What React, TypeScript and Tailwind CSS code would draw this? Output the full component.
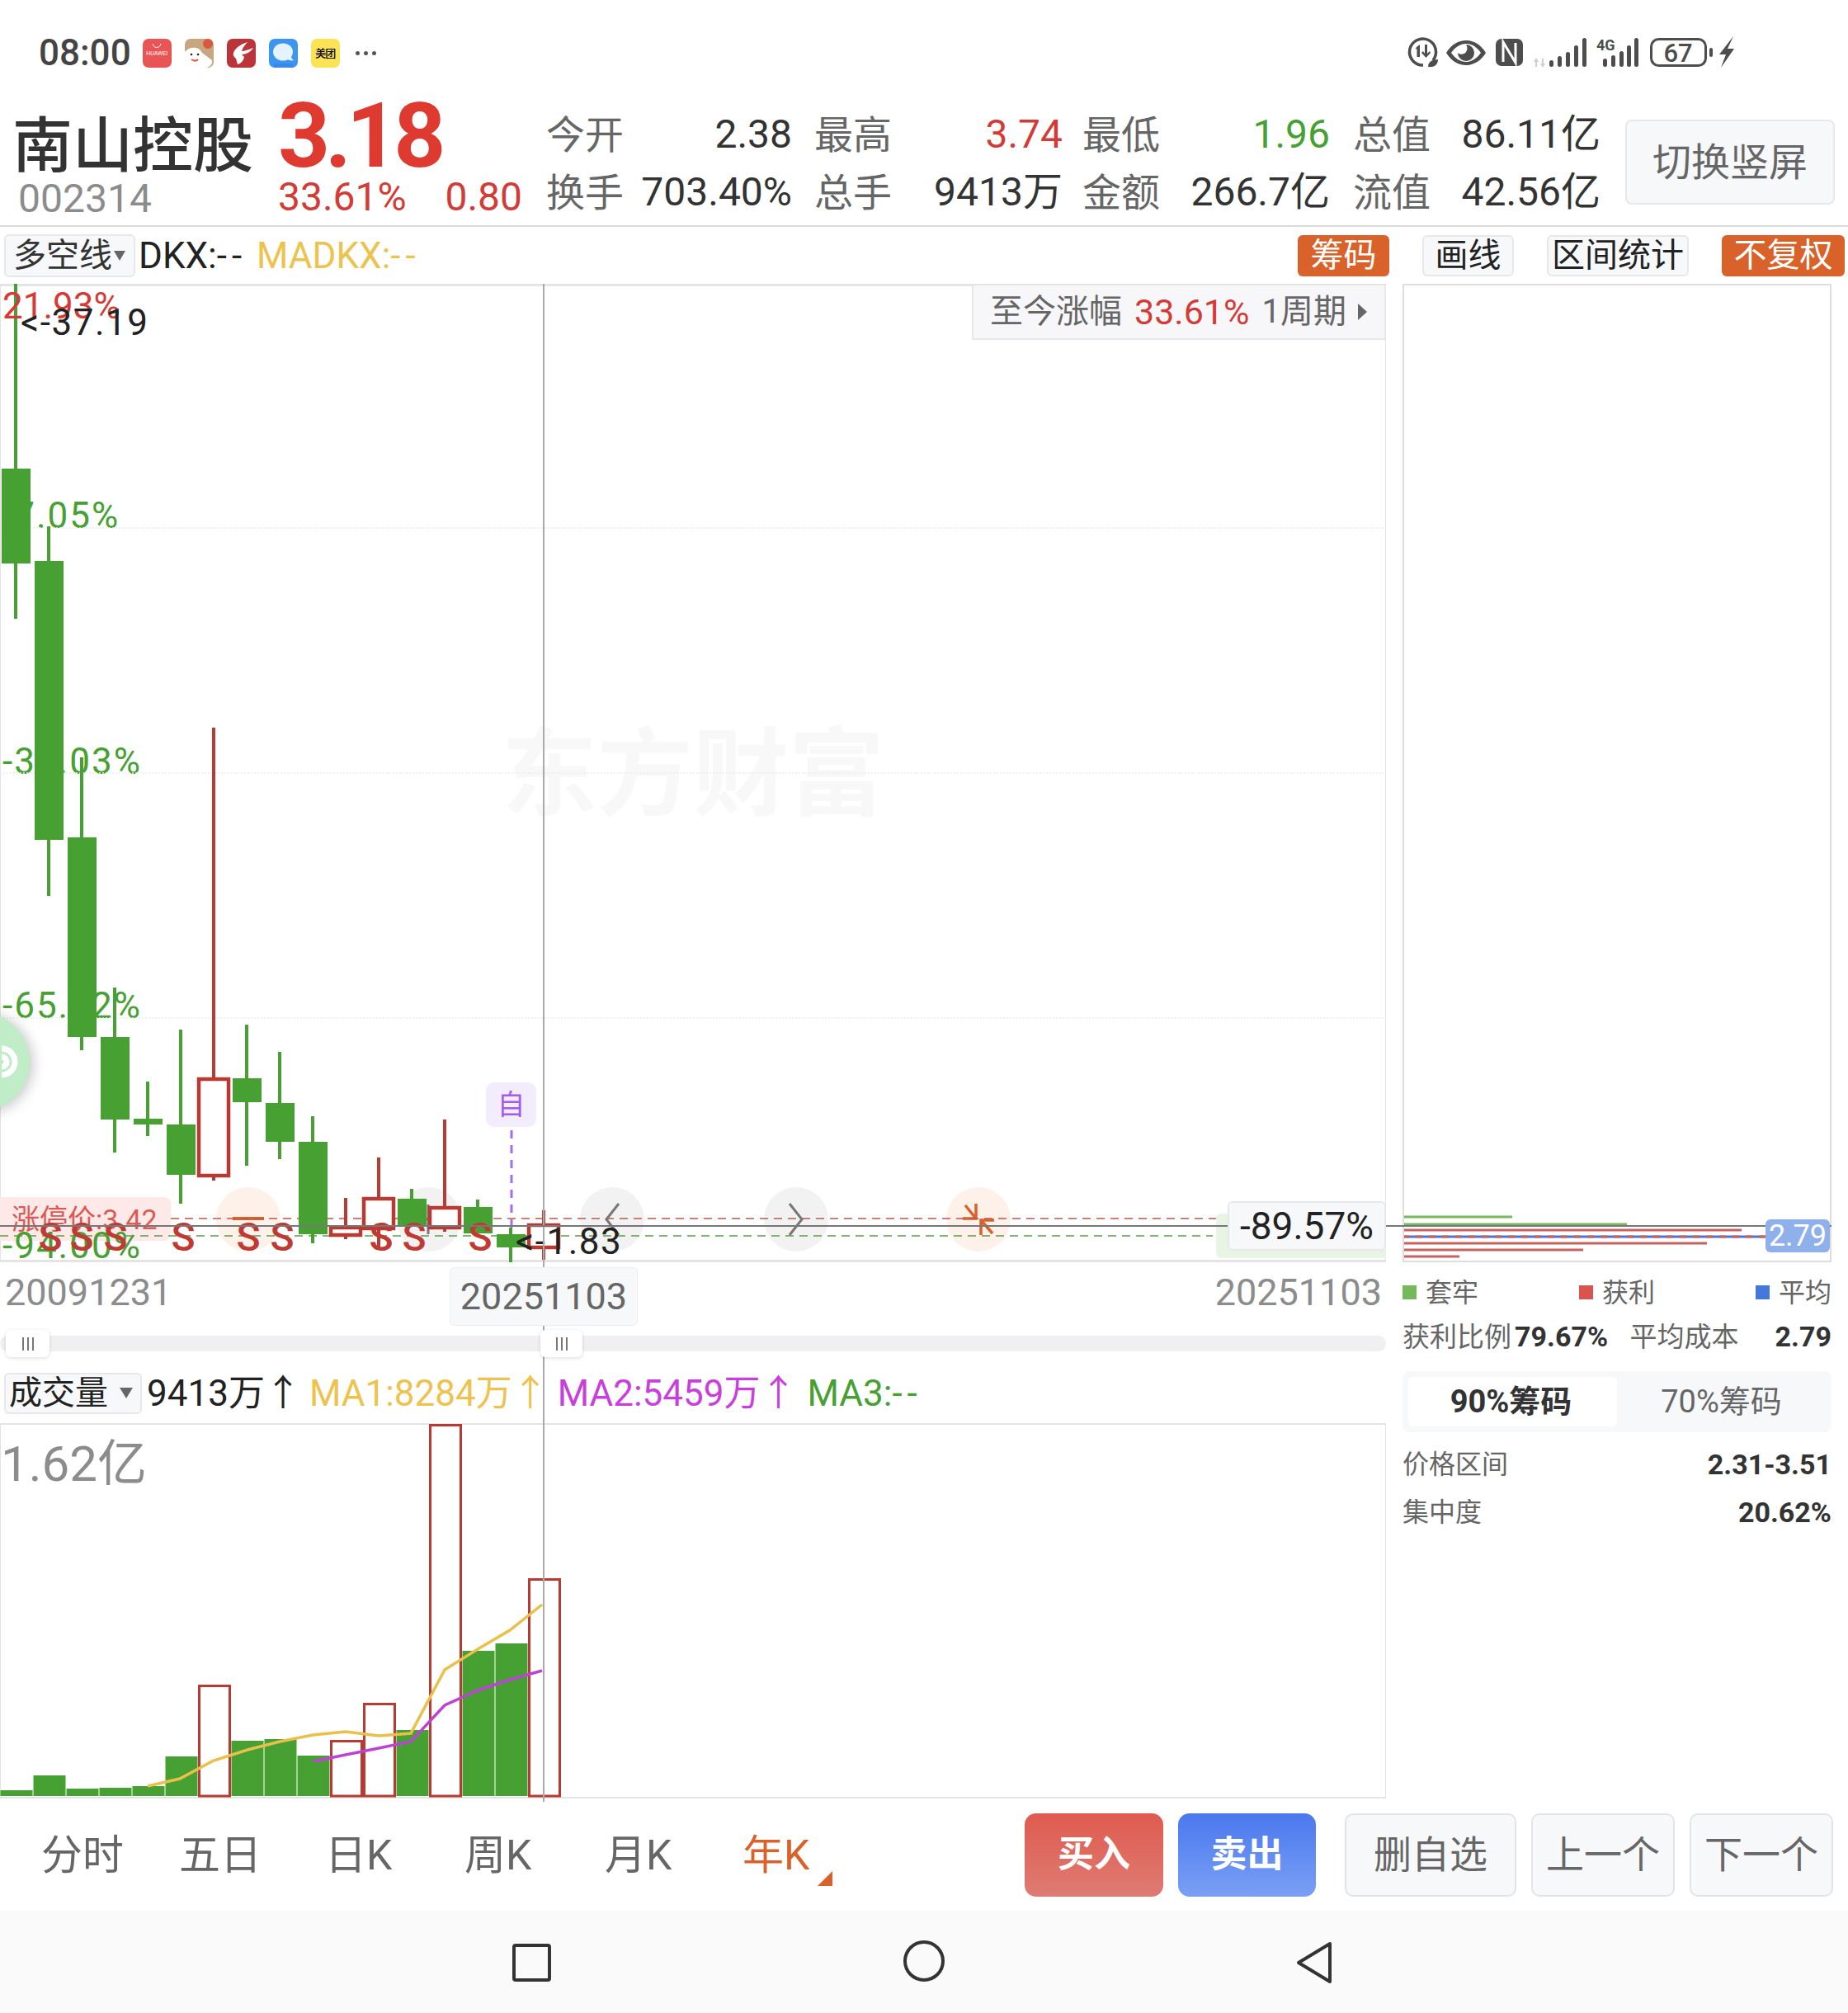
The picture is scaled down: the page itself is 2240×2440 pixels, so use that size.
import React from 'react'

const RED = '#b93a32'
const GREEN = '#46a032'

// x center, wick top/bottom, body top/bottom, up = hollow red
const CANDLES = [
  { x: 19, h: 344, l: 750, t: 568, b: 683, up: false },
  { x: 59, h: 638, l: 1086, t: 680, b: 1018, up: false },
  { x: 99, h: 918, l: 1273, t: 1015, b: 1257, up: false },
  { x: 139, h: 1197, l: 1397, t: 1257, b: 1357, up: false },
  { x: 179, h: 1311, l: 1377, t: 1356, b: 1363, up: false },
  { x: 219, h: 1248, l: 1459, t: 1363, b: 1424, up: false },
  { x: 259, h: 882, l: 1431, t: 1308, b: 1425, up: true },
  { x: 299, h: 1242, l: 1413, t: 1307, b: 1336, up: false },
  { x: 339, h: 1275, l: 1405, t: 1337, b: 1384, up: false },
  { x: 379, h: 1353, l: 1507, t: 1384, b: 1496, up: false },
  { x: 419, h: 1452, l: 1502, t: 1488, b: 1497, up: true },
  { x: 459, h: 1403, l: 1512, t: 1453, b: 1489, up: true },
  { x: 499, h: 1441, l: 1487, t: 1453, b: 1487, up: false },
  { x: 539, h: 1357, l: 1493, t: 1464, b: 1488, up: true },
  { x: 579, h: 1454, l: 1495, t: 1463, b: 1495, up: false },
  { x: 619, h: 1488, l: 1530, t: 1496, b: 1512, up: false },
  { x: 659, h: 1467, l: 1527, t: 1485, b: 1512, up: true },
]

const S_MARKS = [61, 99, 140, 222, 301, 342, 462, 502, 582]

const VOLUMES = [
  { t: 2170, up: false }, { t: 2152, up: false }, { t: 2168, up: false }, { t: 2167, up: false },
  { t: 2165, up: false }, { t: 2129, up: false }, { t: 2042, up: true }, { t: 2110, up: false },
  { t: 2108, up: false }, { t: 2128, up: false }, { t: 2109, up: true }, { t: 2064, up: true },
  { t: 2097, up: false }, { t: 1726, up: true }, { t: 2001, up: false }, { t: 1992, up: false },
  { t: 1913, up: true },
]

const MA1 = '179,2165 218,2156 259,2134 300,2121 339,2111 379,2103 419,2099 459,2104 498,2101 539,2024 579,1999 618,1976 657,1945'
const MA2 = '380,2135 419,2127 459,2119 498,2111 539,2067 579,2049 618,2036 657,2025'

const TABS = [
  { label: '分时', w: 'w-[167px]' },
  { label: '五日', w: 'w-[177px]' },
  { label: '日K', w: 'w-[169px]' },
  { label: '周K', w: 'w-[170px]' },
  { label: '月K', w: 'w-[167px]' },
]

function StatusTiles() {
  return (
    <div className="ml-[14px] flex items-center gap-[16px]">
      <div className="flex h-[35px] w-[35px] flex-col items-center rounded-[7px] bg-[#ea5455] text-white">
        <svg width="14" height="8" viewBox="0 0 14 8" className="mt-[5px]"><path d="M2 1c1 6 9 6 10 0" fill="none" stroke="#fff" strokeWidth="1" /></svg>
        <span className="mt-[2px] text-[7px] leading-none">HUAWEI</span>
      </div>
      <svg width="35" height="35" viewBox="0 0 35 35">
        <rect width="35" height="35" rx="7" fill="#c9a77e" />
        <circle cx="28" cy="6" r="6" fill="#d9593f" />
        <path d="M0 16c6-7 17-7 21 1l12 9c1 5-3 8-7 9H6c-5 0-6-3-6-6z" fill="#fff" />
        <circle cx="8" cy="19" r="1.3" fill="#222" />
        <circle cx="16" cy="19" r="1.3" fill="#222" />
        <path d="M8 25c3 2 6 2 8 0" fill="none" stroke="#d9593f" strokeWidth="2" />
      </svg>
      <svg width="35" height="35" viewBox="0 0 35 35">
        <rect width="35" height="35" rx="7" fill="#bb3439" />
        <path d="M25 4C18 6 10 11 8 17c-1 3 1 5 3 7l2 7c4-1 7-4 8-9l-3-3c5 0 11-3 14-8-5 2-11 4-14 4 1-4 4-8 7-11z" fill="#fff" />
      </svg>
      <svg width="35" height="35" viewBox="0 0 35 35">
        <rect width="35" height="35" rx="7" fill="#3d95f2" />
        <ellipse cx="17" cy="16" rx="12" ry="10.5" fill="#e6f3fe" />
        <path d="M22 25c3 1 6 2 8 1-2-1-3-3-3-5z" fill="#e6f3fe" />
        <path d="M6 30h23v5H6z" fill="#3577e8" opacity=".5" />
      </svg>
      <div className="flex h-[35px] w-[35px] items-center justify-center rounded-[7px] bg-[#fce354] text-[13px] font-medium leading-none tracking-[-1px] text-black">美团</div>
      <div className="ml-[3px] flex gap-[5px]">
        <span className="h-[5px] w-[5px] rounded-full bg-[#555]" />
        <span className="h-[5px] w-[5px] rounded-full bg-[#555]" />
        <span className="h-[5px] w-[5px] rounded-full bg-[#555]" />
      </div>
    </div>
  )
}

function StatusRight() {
  return (
    <svg width="402" height="42" viewBox="1702 44 402 42" className="ml-auto mr-[136px]" fill="#4d4d4d">
      <path d="M1737 74a16 16 0 1 0-12 6" fill="none" stroke="#4d4d4d" strokeWidth="3.5" />
      <path d="M1717 58l4-3v15h-3.500v-10l-2 1z M1727 55h3v11l3-3 1 2-5.500 6-5.500-6 2-2 2 3z" />
      <path d="M1731 82c0-6 5-9 12-9 0 6-4 10-12 9z" />
      <path d="M1753 65c6-10 15-15 24-15s18 5 24 15c-6 10-15 15-24 15s-18-5-24-15zM1759 65c5 7 11 11 18 11s13-4 18-11c-5-7-11-11-18-11s-13 4-18 11z" fillRule="evenodd" />
      <path d="M1777 55a10 10 0 1 1-10 10c3 3 8 2 10-1 2-3 2-6 0-9z" />
      <rect x="1813" y="48" width="33" height="33" rx="7" />
      <path d="M1822 76V52l15 25V53" fill="none" stroke="#fff" strokeWidth="3" />
      <path d="M1859 76l3-5 3 5h-2v6h-2v-6z M1867 78l3 5 3-5h-2v-6h-2v6z" fill="#cfcfcf" />
      <rect x="1878" y="74" width="5" height="8" rx="2.500" />
      <rect x="1888" y="69" width="5" height="13" rx="2.500" />
      <rect x="1898" y="64" width="5" height="18" rx="2.500" />
      <rect x="1908" y="56" width="5" height="26" rx="2.500" />
      <rect x="1918" y="47" width="5" height="35" rx="2.500" />
      <text x="1935" y="62" fontSize="18" fontWeight="700" fontFamily="Roboto, sans-serif">4G</text>
      <rect x="1943" y="72" width="5" height="10" rx="2.500" />
      <rect x="1953" y="68" width="5" height="14" rx="2.500" />
      <rect x="1963" y="63" width="5" height="19" rx="2.500" />
      <rect x="1972" y="56" width="5" height="26" rx="2.500" />
      <rect x="1981" y="47" width="5" height="35" rx="2.500" />
      <rect x="2001.500" y="48.500" width="66" height="32" rx="9" fill="none" stroke="#4d4d4d" strokeWidth="3" />
      <text x="2034" y="76" fontSize="31" fontWeight="500" textAnchor="middle" fontFamily="Roboto, sans-serif">67</text>
      <rect x="2072" y="59" width="4" height="11" rx="2" />
      <path d="M2101 45L2084 67h8l-6 16 16-23h-8z" />
    </svg>
  )
}

function StatCell({ children, color = 'text-[#333]' }: { children: React.ReactNode; color?: string }) {
  return <div className={`whitespace-nowrap text-right text-[48px] ${color}`}>{children}</div>
}

function Label({ children }: { children: React.ReactNode }) {
  return <div className="whitespace-nowrap text-right text-[#666]">{children}</div>
}

function Header() {
  return (
    <div className="flex h-[165px] border-b-2 border-[#dcdcdc]">
      <div className="w-[337px] pl-[15px] pt-[31px]">
        <div className="text-[73px] font-medium leading-[72px] text-[#333]">南山控股</div>
        <div className="mt-[5px] pl-[7px] text-[48px] leading-[46px] text-[#8c8c8c]">002314</div>
      </div>
      <div className="w-[325px]">
        <div className="mt-[5px] text-[110px] font-bold leading-[100px] tracking-[-6px] text-[#de3a30]">3.18</div>
        <div className="mt-[1px] flex w-[296px] justify-between text-[48px] leading-[46px] text-[#d33c36]">
          <span>33.61%</span>
          <span>0.80</span>
        </div>
      </div>
      <div className="mt-[18px] grid h-[140px] grid-cols-[94px_204px_121px_207px_118px_206px_122px_206px] grid-rows-[70px_70px] items-center text-[47px] leading-none">
        <Label>今开</Label><StatCell>2.38</StatCell>
        <Label>最高</Label><StatCell color="text-[#d33c36]">3.74</StatCell>
        <Label>最低</Label><StatCell color="text-[#46a032]">1.96</StatCell>
        <Label>总值</Label><StatCell>86.11亿</StatCell>
        <Label>换手</Label><StatCell>703.40%</StatCell>
        <Label>总手</Label><StatCell>9413万</StatCell>
        <Label>金额</Label><StatCell>266.7亿</StatCell>
        <Label>流值</Label><StatCell>42.56亿</StatCell>
      </div>
      <button className="ml-[30px] mt-[35px] h-[103px] w-[254px] rounded-[8px] border-2 border-[#e6e8eb] bg-[#f7f8fa] pt-[2px] text-[47px] text-[#666]">切换竖屏</button>
    </div>
  )
}

function Toolbar() {
  return (
    <div className="flex h-[69px] items-center text-[40px] leading-none">
      <div className="ml-[5px] flex h-[52px] w-[159px] items-center rounded-[6px] border-2 border-[#e6e8eb] bg-[#f7f8fa] pl-[9px] text-[#333]">
        多空线
        <svg width="14" height="12" viewBox="0 0 14 12" className="ml-[2px]"><path d="M0 0h14L7 12z" fill="#666" /></svg>
      </div>
      <span className="ml-[4px] text-[44px] text-[#222]">DKX:<span className="tracking-[6px]">--</span></span>
      <span className="ml-[12px] text-[44px] text-[#edc34f]">MADKX:<span className="tracking-[6px]">--</span></span>
      <div className="ml-auto mr-[4px] flex items-center gap-[40px]">
        <div className="flex h-[50px] w-[111px] items-center justify-center rounded-[6px] bg-[#d9622b] text-white">筹码</div>
        <div className="flex h-[50px] w-[111px] items-center justify-center rounded-[6px] border-2 border-[#e6e8eb] bg-[#f7f8fa] text-[#222]">画线</div>
        <div className="flex h-[50px] w-[172px] items-center justify-center rounded-[6px] border-2 border-[#e6e8eb] bg-[#f7f8fa] text-[#222]">区间统计</div>
        <div className="flex h-[50px] w-[149px] items-center justify-center rounded-[6px] bg-[#d9622b] text-white">不复权</div>
      </div>
    </div>
  )
}

function CircleBtn({ left, peach, children }: { left: number; peach?: boolean; children: React.ReactNode }) {
  return (
    <div
      className={`absolute top-[1095px] flex h-[78px] w-[78px] items-center justify-center rounded-full ${peach ? 'bg-[#fdf1ea]' : 'bg-[#f2f2f2]'}`}
      style={{ left }}
    >
      {children}
    </div>
  )
}

function CandleChart() {
  return (
    <div className="relative h-[1186px] w-[1680px] overflow-hidden bg-white text-[44px] leading-none">
      <div className="absolute inset-0 border-x border-y-[3px] border-[#e4e4e4]" />

      {/* watermark */}
      <div className="absolute left-[608px] top-[537px] text-[116px] font-bold leading-none text-[#f8f8f8]">东方财富</div>

      <div className="absolute left-[3px] top-[259px] tracking-[2px] text-[#46a032]">-7.05%</div>
      <div className="absolute left-[3px] top-[557px] tracking-[2px] text-[#46a032]">-36.03%</div>
      <div className="absolute left-[3px] top-[853px] tracking-[2px] text-[#46a032]">-65.02%</div>

      <div className="absolute left-0 top-[1107px] flex h-[53px] w-[207px] items-center rounded-r-[8px] bg-[#fce9e8] pl-[14px] text-[34px] text-[#dc5a55]">涨停价:3.42</div>

      <CircleBtn left={262} peach>
        <svg width="38" height="6" viewBox="0 0 38 6" className="mt-[-2px]"><path d="M0 3h38" stroke="#d9622b" strokeWidth="4" /></svg>
      </CircleBtn>
      <CircleBtn left={481}>
        <svg width="40" height="38" viewBox="0 0 40 38"><path d="M1 19h38M19 1v36" stroke="#777" strokeWidth="3" fill="none" /></svg>
      </CircleBtn>
      <CircleBtn left={703}>
        <svg width="20" height="40" viewBox="0 0 20 40"><path d="M18 1L3 20l15 19" stroke="#777" strokeWidth="3" fill="none" /></svg>
      </CircleBtn>
      <CircleBtn left={926}>
        <svg width="20" height="40" viewBox="0 0 20 40"><path d="M2 1l15 19L2 39" stroke="#777" strokeWidth="3" fill="none" /></svg>
      </CircleBtn>
      <CircleBtn left={1147} peach>
        <svg width="40" height="40" viewBox="0 0 40 40" fill="none" stroke="#d9622b" strokeWidth="3.500">
          <path d="M17 1v18H1M4 3l13 16" />
          <path d="M23 39V21h16M37 37L23 21" />
        </svg>
      </CircleBtn>

      <svg className="absolute left-0 top-0" width="1680" height="1186" viewBox="0 344 1680 1186">
        <path d="M0 640h1680M0 937h1680M0 1234h1680" stroke="#ececec" strokeWidth="1.500" strokeDasharray="2 2" />
        <path d="M207 1477h1273" stroke="#c0564f" strokeWidth="1.500" strokeDasharray="10 7" />
        <path d="M0 1498h1470" stroke="#5c9c4a" strokeWidth="1.500" strokeDasharray="10 7" />
        <path d="M620 1370v120" stroke="#a46fe8" strokeWidth="3" strokeDasharray="10 8" />
        {CANDLES.map(c => (
          <g key={c.x}>
            <path d={`M${c.x} ${c.h}V${c.l}`} stroke={c.up ? RED : GREEN} strokeWidth="4" />
            {c.up ? (
              <rect x={c.x - 18} y={c.t} width={36} height={c.b - c.t} fill="#fff" stroke={RED} strokeWidth="4.500" />
            ) : (
              <rect x={c.x - 17} y={c.t} width={35} height={c.b - c.t} fill={GREEN} />
            )}
          </g>
        ))}
      </svg>

      <div className="absolute left-[3px] top-[5px] text-[#d33c36]">21.93%</div>
      <div className="absolute left-[25px] top-[25px] tracking-[1.5px] text-[#222]">&lt;-37.19</div>
      <div className="absolute left-[3px] top-[1147px] h-[39px] leading-[39px] tracking-[2px] text-[#46a032]">-94.00%</div>
      <div className="absolute left-[625px] top-[1139px] tracking-[1.5px] text-[#222]">&lt;-1.83</div>

      {S_MARKS.map(x => (
        <span key={x} className="absolute top-[1132px] w-[40px] text-center text-[48px] font-medium leading-none text-[#c03a33]" style={{ left: x - 20 }}>S</span>
      ))}

      <div className="absolute left-[589px] top-[968px] flex h-[54px] w-[61px] items-center justify-center rounded-[10px] bg-[#f3ecfd] text-[34px] text-[#a25fe6]">自</div>

      <div className="absolute left-[1474px] top-[1127px] h-[54px] w-[206px] rounded-l-[6px] bg-[#e8f5e5]" />
      <div className="absolute left-[1488px] top-[1112px] z-10 flex h-[60px] w-[192px] items-center justify-center rounded-[6px] border-2 border-[#e6e8eb] bg-[#f7f8fa] text-[46px] text-[#222]">-89.57%</div>

      <div className="absolute left-[1178px] top-[2px] z-10 flex h-[66px] w-[502px] items-center border-2 border-t-0 border-[#e8e8e8] bg-[#f7f7fa] pl-[20px] text-[40px] text-[#666]">
        至今涨幅
        <span className="ml-[15px] text-[43px] text-[#d33c36]">33.61%</span>
        <span className="ml-[15px]">1周期</span>
        <svg width="11" height="20" viewBox="0 0 11 20" className="ml-[14px]"><path d="M0 0l11 10L0 20z" fill="#666" /></svg>
      </div>

      {/* floating assistant button */}
      <div className="absolute left-[-84px] top-[883px] flex h-[120px] w-[120px] items-center justify-end rounded-full bg-[#c0ecc8] pr-[12px] shadow-[4px_2px_16px_rgba(0,0,0,0.22)]">
        <svg width="24" height="40" viewBox="0 0 24 40"><path d="M2 4a16 16 0 0 1 0 32M2 14a6 6 0 1 1 0 12" fill="none" stroke="#fff" strokeWidth="7" /></svg>
      </div>
    </div>
  )
}

function DateRow() {
  return (
    <div className="relative flex h-[80px] items-center justify-between pb-[8px] pl-[6px] pr-[5px] text-[45px] leading-none text-[#8c8c8c]">
      <span>20091231</span>
      <span>20251103</span>
      <div className="absolute left-[545px] top-[6px] z-10 flex h-[71px] w-[228px] items-center justify-center rounded-[6px] border border-[#eceef1] bg-[#f7f8fa] text-[#666]">20251103</div>
    </div>
  )
}

function SliderHandle({ left, width }: { left: number; width: number }) {
  return (
    <div
      className="absolute top-[-7px] z-10 flex h-[33px] items-center justify-center gap-[4px] rounded-[6px] bg-white shadow-[0_1px_4px_rgba(0,0,0,0.15)]"
      style={{ left, width }}
    >
      <span className="h-[16px] w-[2px] bg-[#777]" />
      <span className="h-[16px] w-[2px] bg-[#777]" />
      <span className="h-[16px] w-[2px] bg-[#777]" />
    </div>
  )
}

function Slider() {
  return (
    <div className="h-[50px] pt-[9px]">
      <div className="relative h-[19px] w-[1680px] rounded-full bg-[#f0f0f2]">
        <SliderHandle left={7} width={53} />
        <SliderHandle left={655} width={51} />
      </div>
    </div>
  )
}

function VolumeHeader() {
  return (
    <div className="flex h-[65px] items-center whitespace-nowrap pb-[8px] text-[44px] leading-none">
      <div className="ml-[5px] flex h-[50px] w-[167px] items-center rounded-[6px] border-2 border-[#e6e8eb] bg-[#f7f8fa] pl-[4px] text-[40px] text-[#222]">
        成交量
        <svg width="16" height="13" viewBox="0 0 16 13" className="ml-[14px]"><path d="M0 0h16L8 13z" fill="#666" /></svg>
      </div>
      <span className="ml-[6px] text-[#222]">9413万↑</span>
      <span className="ml-[10px] text-[#edc34f]">MA1:8284万↑</span>
      <span className="ml-[11px] text-[#c93fdc]">MA2:5459万↑</span>
      <span className="ml-[13px] text-[#46a032]">MA3:<span className="tracking-[6px]">--</span></span>
    </div>
  )
}

function VolumeChart() {
  return (
    <div className="relative h-[455px] w-[1680px]">
      <div className="absolute inset-0 border-x border-y-2 border-[#e4e4e4]" />
      <svg className="absolute left-0 top-0" width="1680" height="455" viewBox="0 1725 1680 455">
        {VOLUMES.map((v, i) =>
          v.up ? (
            <rect key={i} x={i * 40 + 1.5} y={v.t + 1.5} width={37} height={2177 - v.t - 1.5} fill="#fff" stroke={RED} strokeWidth="3" />
          ) : (
            <rect key={i} x={i * 40 + 0.5} y={v.t} width={39} height={2177 - v.t} fill={GREEN} />
          )
        )}
        <polyline points={MA1} fill="none" stroke="#e9c04c" strokeWidth="3.500" />
        <polyline points={MA2} fill="none" stroke="#bb45d2" strokeWidth="3.500" />
      </svg>
      <div className="absolute left-[1px] top-[20px] text-[60px] leading-none text-[#8c8c8c]">1.62亿</div>
    </div>
  )
}

function ChipPanel() {
  return (
    <div className="relative h-[1186px] w-[520px] border-x-2 border-y-2 border-[#dedede]">
      <svg className="absolute left-0 top-0" width="516" height="1182" viewBox="1702 346 516 1182">
        <path d="M1700 1475h133M1700 1484h272" stroke="#76b95a" strokeWidth="3" />
        <path d="M1700 1491h411M1700 1507h369M1700 1515h219M1700 1523h69" stroke="#c9625f" strokeWidth="3" />
        <path d="M1700 1499h520" stroke="#4f74cc" strokeWidth="3" />
        <path d="M1700 1499h520" stroke="#c9625f" strokeWidth="3" strokeDasharray="8 8" />
      </svg>
      <div className="absolute bottom-[10px] right-0 z-10 flex h-[40px] w-[78px] items-center justify-center rounded-[6px] bg-[#8fb0ea] text-[36px] leading-none text-white">2.79</div>
    </div>
  )
}

function ChipStats() {
  return (
    <div className="w-[520px] text-[#666]">
      <div className="flex h-[75px] items-center justify-between pb-[2px] text-[32px] leading-none">
        <div className="flex items-center"><span className="mr-[11px] h-[17px] w-[17px] bg-[#76b95a]" />套牢</div>
        <div className="flex items-center"><span className="mr-[11px] h-[17px] w-[17px] bg-[#d9534f]" />获利</div>
        <div className="flex items-center"><span className="mr-[11px] h-[17px] w-[17px] bg-[#4378dc]" />平均</div>
      </div>
      <div className="flex h-[30px] items-center text-[33px] leading-none">
        <span>获利比例</span>
        <span className="ml-[4px] text-[34px] font-bold text-[#333]">79.67%</span>
        <span className="ml-auto">平均成本</span>
        <span className="ml-[44px] text-[34px] font-bold text-[#333]">2.79</span>
      </div>
      <div className="mt-[27px] flex h-[74px] rounded-[8px] bg-[#f7f8fa] p-[7px] text-[38px] leading-none">
        <div className="flex w-[253px] items-center justify-center rounded-[6px] bg-white pr-[4px] font-bold text-[#333]">90%筹码</div>
        <div className="flex flex-1 items-center justify-center">70%筹码</div>
      </div>
      <div className="mt-[10px] flex h-[58px] items-center justify-between text-[32px] leading-none">
        <span>价格区间</span>
        <span className="text-[34px] font-bold text-[#333]">2.31-3.51</span>
      </div>
      <div className="flex h-[58px] items-center justify-between text-[32px] leading-none">
        <span>集中度</span>
        <span className="text-[34px] font-bold text-[#333]">20.62%</span>
      </div>
    </div>
  )
}

function BottomBar() {
  return (
    <div className="flex h-[136px] items-center pl-[50px] text-[50px] leading-none">
      <div className="flex items-center pt-[2px]">
        {TABS.map(t => (
          <div key={t.label} className={`${t.w} text-[#666]`}>{t.label}</div>
        ))}
        <div className="relative text-[#d9622b]">
          年K
          <svg width="18" height="18" viewBox="0 0 18 18" className="absolute bottom-[-12px] right-[-28px]"><path d="M18 0v18H0z" fill="#d9622b" /></svg>
        </div>
      </div>
      <div className="ml-auto mr-[18px] flex h-[101px] items-center text-[44px]">
        <button className="h-full w-[168px] rounded-[14px] bg-gradient-to-b from-[#df5a4e] to-[#de7b74] font-bold text-white">买入</button>
        <button className="ml-[18px] h-full w-[167px] rounded-[14px] bg-gradient-to-b from-[#4a78ee] to-[#7a9ff5] font-bold text-white">卖出</button>
        <button className="ml-[35px] h-full w-[208px] rounded-[10px] border-2 border-[#e2e4e8] bg-[#f7f8fa] text-[46px] text-[#666]">删自选</button>
        <button className="ml-[18px] h-full w-[174px] rounded-[10px] border-2 border-[#e2e4e8] bg-[#f7f8fa] text-[46px] text-[#666]">上一个</button>
        <button className="ml-[18px] h-full w-[174px] rounded-[10px] border-2 border-[#e2e4e8] bg-[#f7f8fa] text-[46px] text-[#666]">下一个</button>
      </div>
    </div>
  )
}

function NavBar() {
  return (
    <div className="flex h-[124px] items-center justify-center bg-[#fafafa]">
      <svg width="2240" height="124" viewBox="0 2316 2240 124" fill="none" stroke="#333" strokeWidth="4">
        <rect x="623" y="2358" width="43" height="42" rx="2" />
        <circle cx="1120" cy="2377" r="23" />
        <path d="M1612 2356v46l-38-23z" strokeLinejoin="round" />
      </svg>
    </div>
  )
}

export default function App() {
  return (
    <div className="relative h-[2440px] w-[2240px] overflow-hidden bg-white font-['Roboto','Noto_Sans_CJK_SC',sans-serif]">
      {/* status bar */}
      <div className="flex h-[110px] items-center pl-[47px] pt-[18px]">
        <span className="text-[44px] font-medium leading-none text-[#444]">08:00</span>
        <StatusTiles />
        <StatusRight />
      </div>

      <Header />
      <Toolbar />

      <div className="flex gap-[20px]">
        <div className="w-[1680px]">
          <CandleChart />
          <DateRow />
          <Slider />
          <VolumeHeader />
          <VolumeChart />
        </div>
        <div className="w-[520px]">
          <ChipPanel />
          <ChipStats />
        </div>
      </div>

      <BottomBar />
      <NavBar />

      {/* crosshair */}
      <div className="absolute left-[658px] top-[344px] z-[5] h-[1840px] w-[2px] bg-[#aaaaaa]" />
      <div className="absolute left-0 top-[1485px] z-[5] h-[2px] w-[2220px] bg-[#777]" />
    </div>
  )
}
